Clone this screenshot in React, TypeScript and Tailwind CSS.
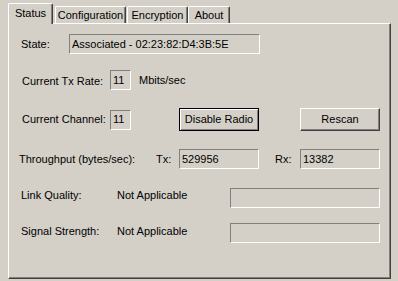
const sunken = "border-t border-l border-t-[#808080] border-l-[#808080] border-b border-r border-b-white border-r-white";

const Field = ({ w, children }: { w: string; children?: React.ReactNode }) => (
  <div className={`${w} h-[20px] ${sunken} flex items-center pl-[2px] leading-none`}>{children}</div>
);

const Tab = ({ label, active, w, ml }: { label: string; active?: boolean; w: string; ml?: string }) => (
  <div
    className={`${w} ${ml ?? ""} bg-[#d4d0c8] border-l border-t border-white border-r border-r-[#404040] rounded-tl-[2px] rounded-tr-[2px] shadow-[inset_-1px_0_0_#808080] flex justify-center ${
      active ? "relative z-10 h-[21px] mb-[-1px] pt-[3px]" : "h-[17px] pt-[2px]"
    }`}
  >
    {label}
  </div>
);

export default function App() {
  return (
    <div
      className="w-[398px] h-[281px] bg-[#d4d0c8] pl-[8px] pt-[3px] text-[11px] text-black leading-[13px] overflow-hidden"
      style={{ fontFamily: '"Liberation Sans", Arial, sans-serif' }}
    >
      <div className="flex items-end h-[20px]">
        <Tab label="Status" active w="w-[45px]" />
        <Tab label="Configuration" w="w-[71px]" ml="ml-[2px]" />
        <Tab label="Encryption" w="w-[61px]" ml="ml-[1px]" />
        <Tab label="About" w="w-[42px]" ml="ml-[0px]" />
      </div>

      <div className="w-[383px] h-[256px] border-l border-t border-white border-r border-b border-r-[#404040] border-b-[#404040] shadow-[inset_-1px_-1px_0_#808080]">
        {/* State */}
        <div className="flex items-center h-[20px] mt-[10px] pl-[12px]">
          <span className="w-[48px]">State:</span>
          <Field w="w-[191px]">Associated - 02:23:82:D4:3B:5E</Field>
        </div>

        {/* Tx rate */}
        <div className="flex items-center h-[20px] mt-[16px] pl-[13px]">
          <span className="w-[88px] mt-[2px]">Current Tx Rate:</span>
          <Field w="w-[21px]">11</Field>
          <span className="ml-[8px]">Mbits/sec</span>
        </div>

        {/* Channel */}
        <div className="flex items-center h-[23px] mt-[18px] pl-[13px]">
          <span className="w-[88px]">Current Channel:</span>
          <Field w="w-[21px]">11</Field>
          <button className="ml-[48px] w-[80px] h-[23px] border border-black shadow-[inset_1px_1px_0_#ffffff,inset_-1px_-1px_0_#808080] bg-[#d4d0c8] flex items-center justify-center">
            Disable Radio
          </button>
          <button className="ml-[41px] w-[80px] h-[23px] border-l border-t border-white border-r border-b border-r-[#404040] border-b-[#404040] shadow-[inset_-1px_-1px_0_#808080] bg-[#d4d0c8] flex items-center justify-center">
            Rescan
          </button>
        </div>

        {/* Throughput */}
        <div className="flex items-center h-[20px] mt-[18px] pl-[10px]">
          <span className="w-[137px]">Throughput (bytes/sec):</span>
          <span className="w-[23px]">Tx:</span>
          <Field w="w-[80px]">529956</Field>
          <span className="ml-[16px] w-[25px]">Rx:</span>
          <Field w="w-[80px]">13382</Field>
        </div>

        {/* Link quality */}
        <div className="flex items-center h-[20px] mt-[19px] pl-[12px]">
          <span className="w-[96px] mb-[6px]">Link Quality:</span>
          <span className="w-[113px] mb-[6px]">Not Applicable</span>
          <Field w="w-[150px]" />
        </div>

        {/* Signal strength */}
        <div className="flex items-center h-[20px] mt-[15px] pl-[12px]">
          <span className="w-[96px] mb-[4px]">Signal Strength:</span>
          <span className="w-[113px] mb-[4px]">Not Applicable</span>
          <Field w="w-[150px]" />
        </div>
      </div>
    </div>
  );
}
